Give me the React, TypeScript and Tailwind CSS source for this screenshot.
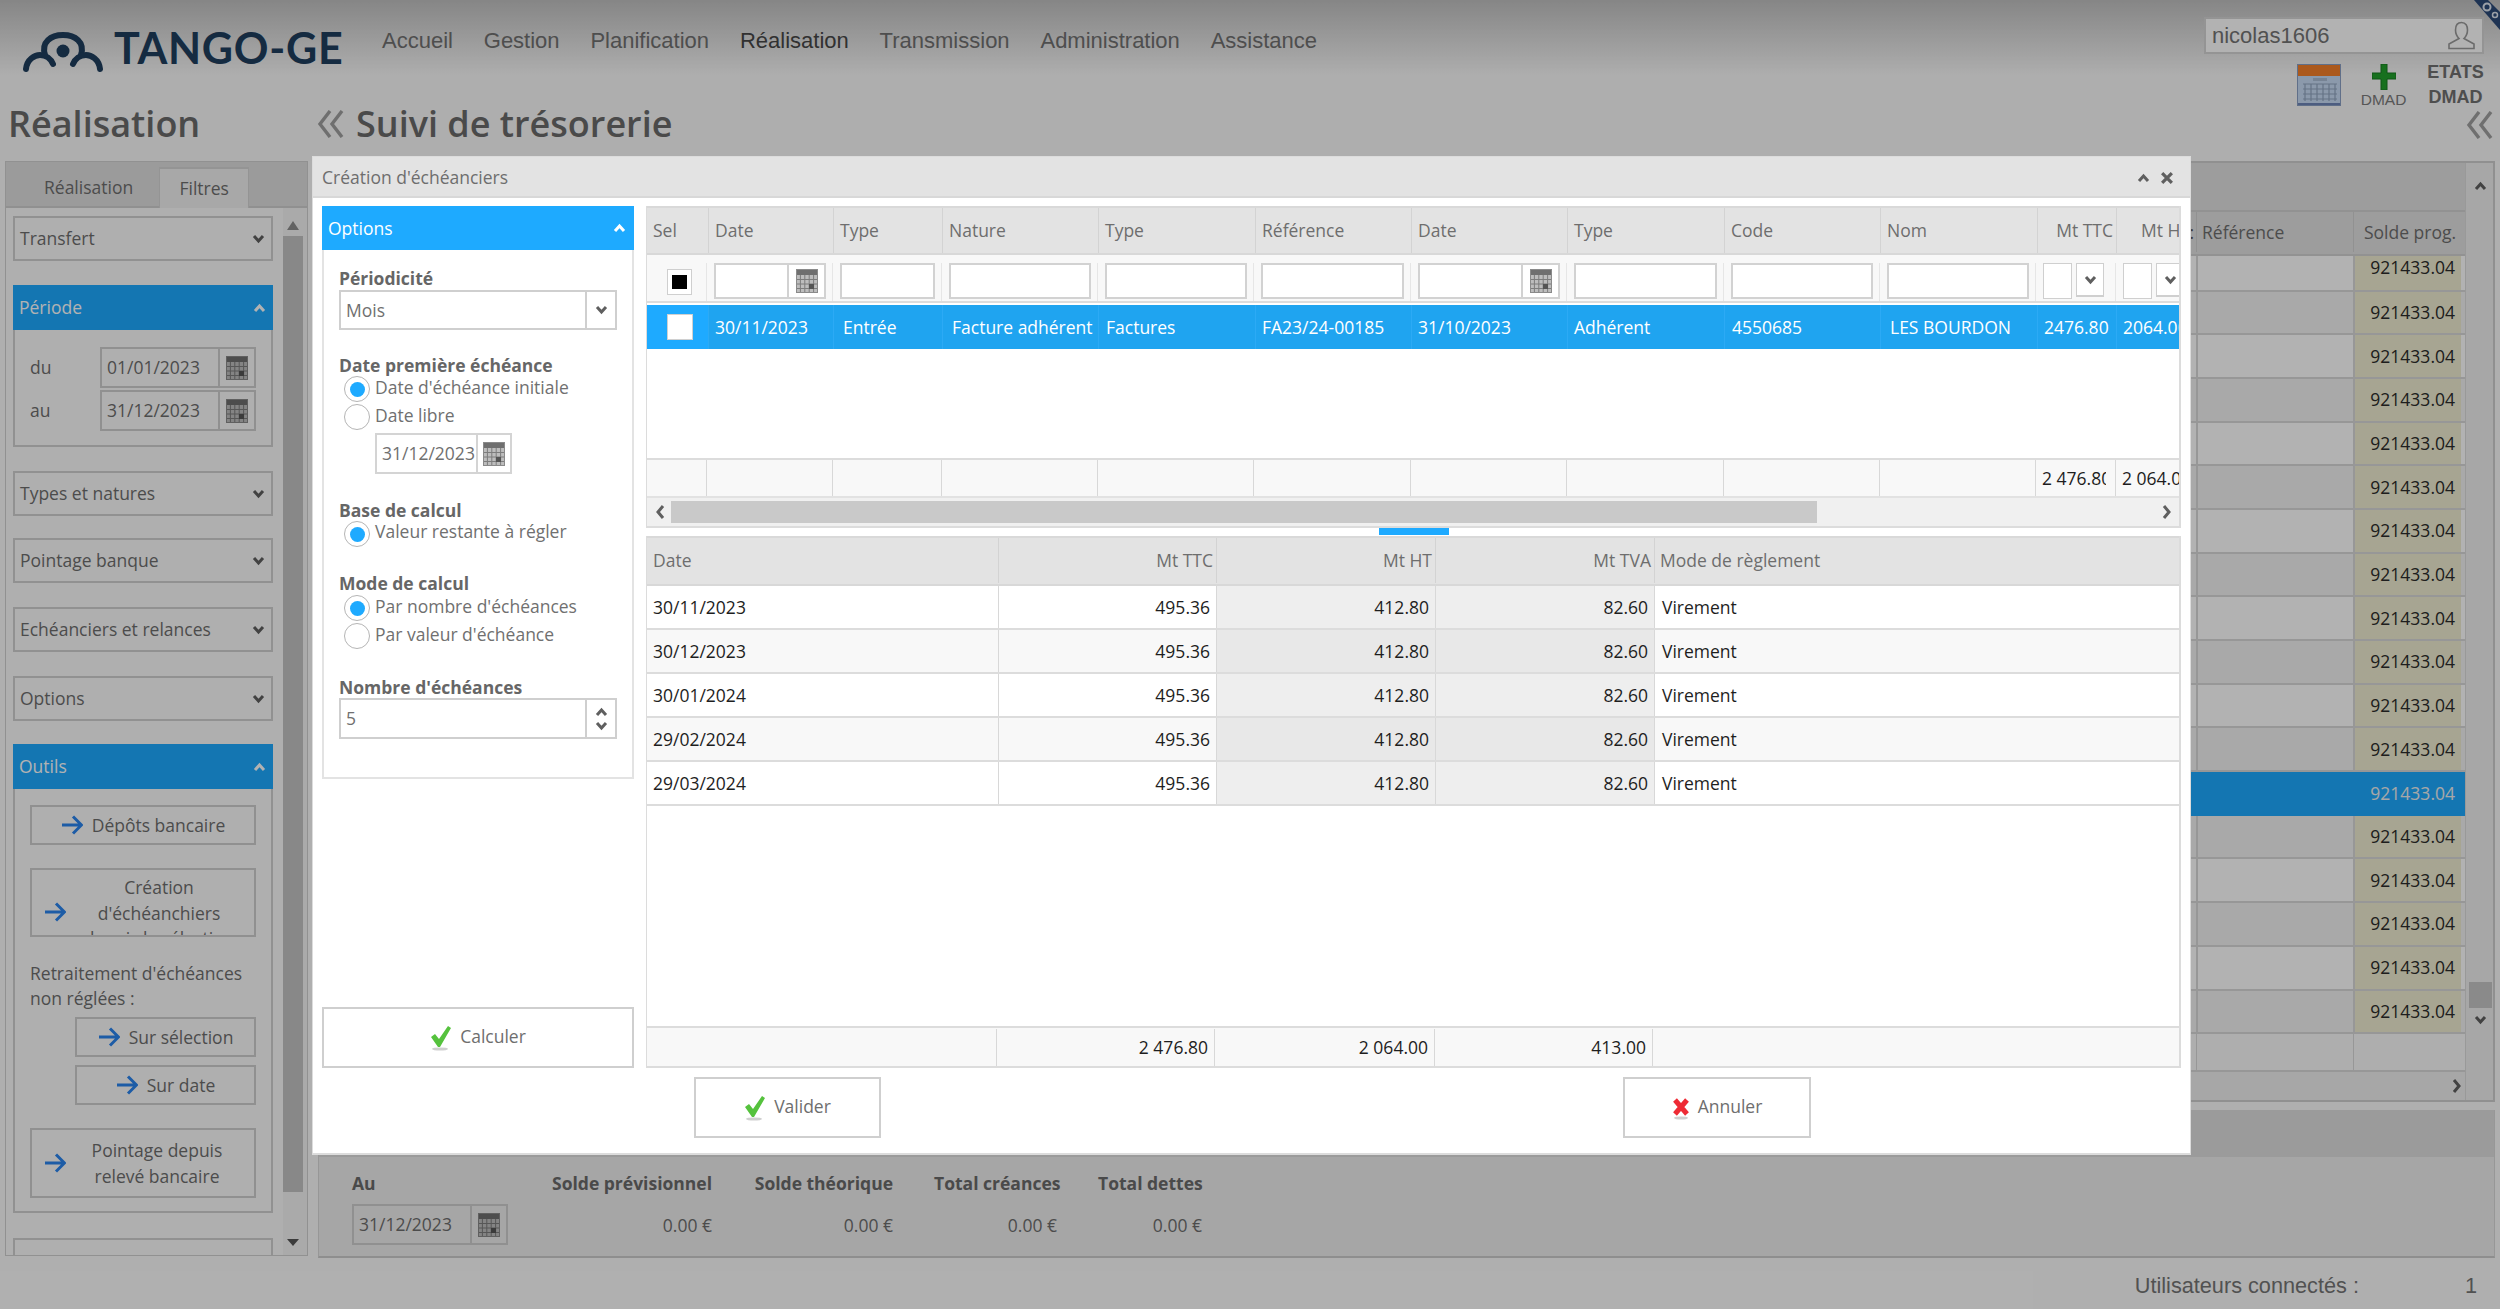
import React from "react";

const Cal = ({ className = "w-[22px] h-[24px]" }: { className?: string }) => (
  <svg viewBox="0 0 22 24" className={className}>
    <rect x="0" y="0" width="22" height="24" fill="#bdbdbd" />
    <rect x="0" y="0" width="22" height="6" fill="#6f6f6f" />
    {[1, 2, 3, 4].map((i) => (
      <line key={i} x1={i * 4.4} x2={i * 4.4} y1="6" y2="24" stroke="#7d7d7d" strokeWidth="1" />
    ))}
    {[1, 2, 3].map((i) => (
      <line key={i} x1="0" x2="22" y1={6 + i * 4.5} y2={6 + i * 4.5} stroke="#7d7d7d" strokeWidth="1" />
    ))}
    <rect x="13" y="15" width="5" height="5" fill="#555" />
    <rect x="0.5" y="0.5" width="21" height="23" fill="none" stroke="#8a8a8a" />
  </svg>
);

const Chev = ({ up = false, className = "w-[13px] h-[10px]", color = "#5f5f5f" }: { up?: boolean; className?: string; color?: string }) => (
  <svg viewBox="0 0 13 10" className={className}>
    <path d={up ? "M2 8 L6.5 3 L11 8" : "M2 2 L6.5 7 L11 2"} fill="none" stroke={color} strokeWidth="3" />
  </svg>
);

const Side = ({ right = false }: { right?: boolean }) => (
  <svg viewBox="0 0 10 14" className="w-[10px] h-[14px]">
    <path d={right ? "M2 1 L7 7 L2 13" : "M8 1 L3 7 L8 13"} fill="none" stroke="#5f5f5f" strokeWidth="3" />
  </svg>
);

const Arrow = () => (
  <svg viewBox="0 0 22 20" className="w-[22px] h-[20px] shrink-0">
    <path d="M1 10 H20 M12 1.5 L20.5 10 L12 18.5" fill="none" stroke="#2a84ee" strokeWidth="3" />
  </svg>
);

const Check = () => (
  <svg viewBox="0 0 22 26" className="w-[22px] h-[26px] shrink-0">
    <ellipse cx="10" cy="24" rx="8" ry="1.6" fill="#cfcfcf" />
    <path d="M1 12 L5 9 L9 14 L18 1 L21 3 L10 22 L8 22 Z" fill="#55c23d" />
  </svg>
);

const Cross = () => (
  <svg viewBox="0 0 18 24" className="w-[18px] h-[24px] shrink-0">
    <ellipse cx="9" cy="22" rx="7" ry="1.6" fill="#cfcfcf" />
    <path d="M3 4 L15 18 M15 4 L3 18" stroke="#ee2b35" strokeWidth="5" />
  </svg>
);

const DoubleLeft = () => (
  <svg viewBox="0 0 28 28" className="w-[28px] h-[28px]">
    <path d="M13 1 L3 14 L13 27 M25 1 L15 14 L25 27" fill="none" stroke="#a0a0a0" strokeWidth="3.4" />
  </svg>
);

const Radio = ({ on = false }: { on?: boolean }) => (
  <span className="w-[26px] h-[26px] rounded-full border border-[#b5b5b5] bg-white flex items-center justify-center shrink-0">
    {on && <span className="w-[15px] h-[15px] rounded-full bg-[#1eaaff]" />}
  </span>
);

const SideHead = ({ label, mt }: { label: string; mt: string }) => (
  <div className={`${mt} h-[45px] shrink-0 border-2 border-[#d0d0d0] flex items-center justify-between pl-[5px] pr-[6px]`}>
    <span>{label}</span>
    <Chev />
  </div>
);

const BlueHead = ({ label, mt, bg = "bg-[#1eaaff]" }: { label: string; mt: string; bg?: string }) => (
  <div className={`${mt} ${bg} h-[45px] shrink-0 flex items-center justify-between pl-[6px] pr-[7px] text-white`}>
    <span>{label}</span>
    <Chev up color="#ffffff" />
  </div>
);

const DateBox = ({ value, cls }: { value: string; cls: string }) => (
  <div className={`${cls} h-[41px] border-2 border-[#cfcfcf] flex items-center shrink-0`}>
    <span className="flex-1 pl-[5px] whitespace-nowrap overflow-hidden">{value}</span>
    <span className="w-[36px] h-full border-l-2 border-[#cfcfcf] flex items-center justify-center shrink-0">
      <Cal />
    </span>
  </div>
);

const top = [
  { w: "w-[62px]", h: "Sel", v: "", p: "pl-[6px]", vp: "pl-[6px]" },
  { w: "w-[125px]", h: "Date", v: "30/11/2023", p: "pl-[6px]", vp: "pl-[6px]" },
  { w: "w-[109px]", h: "Type", v: "Entrée", p: "pl-[6px]", vp: "pl-[9px]" },
  { w: "w-[156px]", h: "Nature", v: "Facture adhérent", p: "pl-[6px]", vp: "pl-[9px]" },
  { w: "w-[157px]", h: "Type", v: "Factures", p: "pl-[6px]", vp: "pl-[7px]" },
  { w: "w-[156px]", h: "Référence", v: "FA23/24-00185", p: "pl-[6px]", vp: "pl-[6px]" },
  { w: "w-[156px]", h: "Date", v: "31/10/2023", p: "pl-[6px]", vp: "pl-[6px]" },
  { w: "w-[157px]", h: "Type", v: "Adhérent", p: "pl-[6px]", vp: "pl-[6px]" },
  { w: "w-[156px]", h: "Code", v: "4550685", p: "pl-[6px]", vp: "pl-[7px]" },
  { w: "w-[157px]", h: "Nom", v: "LES BOURDON", p: "pl-[6px]", vp: "pl-[9px]" },
];

const filterW = ["w-[60px]", "w-[126px]", "w-[109px]", "w-[156px]", "w-[156px]", "w-[157px]", "w-[156px]", "w-[157px]", "w-[156px]", "w-[156px]", "w-[80px]", "w-[78px]"];

const echeances = ["30/11/2023", "30/12/2023", "30/01/2024", "29/02/2024", "29/03/2024"];
const leftRows = Array.from({ length: 18 }, (_, i) => i);

const SideBtn = ({ cls, children }: { cls: string; children: React.ReactNode }) => (
  <div className={`${cls} border-2 border-[#cfcfcf] shrink-0 flex items-center justify-center gap-[9px] overflow-hidden`}>{children}</div>
);

const BigBtn = ({ cls, icon, label }: { cls: string; icon: React.ReactNode; label: string }) => (
  <div className={`${cls} border-2 border-[#cfcfcf] bg-white flex items-center justify-center gap-[8px] text-[#6e6e6e] shrink-0`}>
    {icon}
    <span className="pb-[2px]">{label}</span>
  </div>
);

export default function App() {
  return (
    <div className="relative w-[2500px] h-[1309px] overflow-hidden flex flex-col bg-[#fbfbfb] text-[17.5px] leading-[25px] text-[#6e6e6e] font-['Open_Sans',sans-serif]">
      {/* Header */}
      <header className="h-[161px] shrink-0 flex justify-between bg-[linear-gradient(#c0c0c0,#f9f9f9_75px,#f9f9f9)]">
        <div className="flex flex-col">
          <div className="h-[82px] flex items-start">
            <div className="flex items-center pl-[23px] pt-[32px] gap-[11px] w-[382px]">
              <svg viewBox="0 0 80 40" className="w-[80px] h-[40px] shrink-0">
                <g fill="none" stroke="#1f3e5d" strokeWidth="6" strokeLinecap="round">
                  <path d="M3 37 C4 27 12 23 17 23 C23 23 28 27 30 32" />
                  <path d="M22 23 C18 10 28 3 40 3 C52 3 62 10 58 23" />
                  <path d="M50 32 C52 27 57 23 63 23 C68 23 76 27 77 37" />
                </g>
                <circle cx="40" cy="19" r="6.5" fill="#1f3e5d" />
              </svg>
              <span className="font-['Lato',sans-serif] font-bold text-[43px] leading-[40px] tracking-[0.7px] text-[#1f3e5d] whitespace-nowrap -translate-y-[4px]">TANGO-GE</span>
            </div>
            <nav className="flex gap-[30.85px] pt-[27px] text-[22px] leading-[28px] font-['Liberation_Sans',sans-serif] text-[#707070] whitespace-nowrap">
              <span>Accueil</span>
              <span>Gestion</span>
              <span>Planification</span>
              <span className="text-[#474747]">Réalisation</span>
              <span>Transmission</span>
              <span>Administration</span>
              <span>Assistance</span>
            </nav>
          </div>
          <div className="flex items-center pl-[8px] pt-[19px] text-[36px] leading-[46px] font-semibold text-[#6a6a6a] whitespace-nowrap">
            <span className="w-[309px]">Réalisation</span>
            <DoubleLeft />
            <span className="ml-[11px]">Suivi de trésorerie</span>
          </div>
        </div>
        <div className="flex flex-col items-end pr-[5px]">
          <div className="mt-[17px] mr-[11px] w-[280px] h-[37px] border-2 border-[#d4d4d4] bg-white flex items-center justify-between pl-[6px] pr-[6px] text-[22px] font-['Liberation_Sans',sans-serif] text-[#757575]">
            <span>nicolas1606</span>
            <svg viewBox="0 0 29 29" className="w-[29px] h-[29px]">
              <path d="M14.5 1.5 C10 1.5 8.5 5 8.5 9 C8.5 13 10.5 16 12 17.5 L2 23 V27.5 H27 V23 L17 17.5 C18.5 16 20.5 13 20.5 9 C20.5 5 19 1.5 14.5 1.5 Z" fill="none" stroke="#9a9a9a" strokeWidth="1.6" />
            </svg>
          </div>
          <div className="mt-[10px] mr-[10px] flex items-start font-['Liberation_Sans',sans-serif]">
            <svg viewBox="0 0 44 42" className="w-[44px] h-[42px]">
              <rect x="0" y="0" width="44" height="42" fill="#c8dcf5" />
              <rect x="0" y="0" width="44" height="12" fill="#f5802a" />
              <rect x="0" y="39" width="44" height="3" fill="#6f86b8" />
              <rect x="0.5" y="0.5" width="43" height="41" fill="none" stroke="#8aa0c4" />
              <g stroke="#8fa4bf" strokeWidth="1.2">
                {[8, 14, 20, 26, 32, 38].map((x) => (
                  <line key={x} x1={x} x2={x} y1="20" y2="37" />
                ))}
                {[20, 25, 30, 35].map((y) => (
                  <line key={y} x1="6" x2="40" y1={y} y2={y} />
                ))}
              </g>
              <rect x="16" y="14" width="14" height="3" fill="#a9bcd4" />
            </svg>
            <div className="ml-[20px] w-[45px] flex flex-col items-center">
              <svg viewBox="0 0 24 26" className="w-[24px] h-[26px]">
                <path d="M9 0 H15 V9 H24 V15 H15 V26 H9 V15 H0 V9 H9 Z" fill="#22a12c" stroke="#167a20" strokeWidth="1" />
              </svg>
              <span className="text-[15.5px] leading-[20px] text-[#7c7c7c]">DMAD</span>
            </div>
            <div className="ml-[20px] w-[59px] flex flex-col items-center font-bold text-[18px] leading-[25px] text-[#707070] -mt-[4px]">
              <span>ETATS</span>
              <span>DMAD</span>
            </div>
          </div>
          <div className="mt-[1px] mr-[1px]">
            <DoubleLeft />
          </div>
        </div>
      </header>

      {/* Page body */}
      <div className="h-[1096px] shrink-0 flex pl-[5px] pr-[5px] gap-[10px]">
        {/* Sidebar */}
        <aside className="w-[303px] shrink-0 border border-[#d0d0d0] flex flex-col h-[1095px] overflow-hidden">
          <div className="h-[46px] shrink-0 bg-[#dfdfdf] border-b-2 border-[#cfcfcf] flex items-end pl-[38px] pt-[6px]">
            <span className="pb-[6px] pr-[26px]">Réalisation</span>
            <span className="h-[41px] w-[90px] bg-[#f1f1f1] border-t-2 border-x border-[#d4d4d4] flex items-center justify-center -mb-[2px]">Filtres</span>
          </div>
          <div className="flex-1 flex min-h-0 overflow-hidden">
            <div className="w-[277px] shrink-0 pl-[7px] pr-[10px] flex flex-col overflow-hidden">
              <SideHead label="Transfert" mt="mt-[8px]" />
              <BlueHead label="Période" mt="mt-[24px]" />
              <div className="h-[117px] shrink-0 border-2 border-t-0 border-[#d0d0d0] pt-[17px] pl-[15px]">
                <div className="flex items-center">
                  <span className="w-[70px]">du</span>
                  <DateBox value="01/01/2023" cls="w-[156px]" />
                </div>
                <div className="flex items-center mt-[2px]">
                  <span className="w-[70px]">au</span>
                  <DateBox value="31/12/2023" cls="w-[156px]" />
                </div>
              </div>
              <SideHead label="Types et natures" mt="mt-[24px]" />
              <SideHead label="Pointage banque" mt="mt-[22px]" />
              <SideHead label="Echéanciers et relances" mt="mt-[24px]" />
              <SideHead label="Options" mt="mt-[24px]" />
              <BlueHead label="Outils" mt="mt-[23px]" />
              <div className="h-[424px] shrink-0 border-2 border-t-0 border-[#d0d0d0] pl-[15px] pr-[15px] pt-[16px] flex flex-col">
                <SideBtn cls="h-[40px]">
                  <Arrow />
                  <span>Dépôts bancaire</span>
                </SideBtn>
                <div className="h-[69px] mt-[23px] border-2 border-[#cfcfcf] shrink-0 flex items-start overflow-hidden pl-[12px]">
                  <span className="mt-[32px]"><Arrow /></span>
                  <span className="flex-1 text-center pt-[5px] pr-[6px] pl-[4px] leading-[25.5px]">Création d'échéanchiers depuis la sélection</span>
                </div>
                <p className="mt-[24px]">Retraitement d'échéances<br />non réglées :</p>
                <SideBtn cls="h-[40px] ml-[45px] mt-[6px]">
                  <Arrow />
                  <span>Sur sélection</span>
                </SideBtn>
                <SideBtn cls="h-[40px] ml-[45px] mt-[8px]">
                  <Arrow />
                  <span>Sur date</span>
                </SideBtn>
                <div className="h-[70px] mt-[23px] border-2 border-[#cfcfcf] shrink-0 flex items-center pl-[12px]">
                  <Arrow />
                  <span className="flex-1 text-center leading-[26px] pr-[6px]">Pointage depuis<br />relevé bancaire</span>
                </div>
              </div>
              <div className="mt-[25px] h-[40px] shrink-0 border-2 border-[#d0d0d0]" />
            </div>
            <div className="w-[24px] shrink-0 flex flex-col items-center pr-[4px] bg-[#f4f4f4]">
              <svg viewBox="0 0 12 9" className="w-[12px] h-[9px] mt-[13px] shrink-0"><path d="M6 0 L12 9 H0 Z" fill="#8f8f8f" /></svg>
              <div className="mt-[6px] w-[20px] h-[956px] bg-[#c3c3c3] shrink-0" />
              <svg viewBox="0 0 12 7" className="w-[12px] h-[7px] mt-[47px] shrink-0"><path d="M0 0 H12 L6 7 Z" fill="#555" /></svg>
            </div>
          </div>
        </aside>

        {/* Main */}
        <main className="flex-1 min-w-0 flex flex-col">
          <div className="h-[941px] shrink-0 border-2 border-[#cfcfcf] border-l flex overflow-hidden">
            <div className="flex-1 min-w-0 flex flex-col">
              <div className="h-[47px] shrink-0 bg-[#e1e1e1]" />
              <div className="h-[46px] shrink-0 bg-[#e1e1e1] border-y-2 border-[#d2d2d2] flex items-center pb-[2px]">
                <span className="flex-1 text-right pr-[2px] text-[#555]">:</span>
                <span className="w-[157px] border-l border-[#d0d0d0] h-full flex items-center pl-[5px]">Référence</span>
                <span className="w-[112px] border-l border-[#d0d0d0] h-full flex items-center pl-[10px] whitespace-nowrap overflow-hidden">Solde prog.</span>
              </div>
              <div className="h-[778px] shrink-0 overflow-hidden flex flex-col">
                {leftRows.map((i) =>
                  i === 12 ? (
                    <div key={i} className="h-[43.7px] shrink-0 bg-[#1eaaff] flex items-center justify-end pr-[10px] text-[#f0f0f0]">921433.04</div>
                  ) : (
                    <div key={i} className={`${i === 0 ? "h-[35.5px]" : "h-[43.7px]"} shrink-0 flex border-b-2 border-[#d8d8d8] ${i % 2 === 0 ? "bg-white" : "bg-[#f3f3f3]"}`}>
                      <span className="flex-1" />
                      <span className="w-[157px] border-l-2 border-[#d8d8d8]" />
                      <span className={`w-[108px] border-l-2 border-[#d8d8d8] bg-[#f0edd1] flex items-center justify-end pr-[6px] text-[#2b2b2b] ${i === 0 ? "pb-[10px]" : ""}`}>921433.04</span>
                      <span className="w-[4px]" />
                    </div>
                  )
                )}
              </div>
              <div className="h-[38px] shrink-0 flex justify-end border-b-2 border-[#d8d8d8] bg-[#f9f9f9]">
                <span className="w-[157px] border-l border-[#d8d8d8]" />
                <span className="w-[112px] border-l border-[#d8d8d8]" />
              </div>
              <div className="flex-1 bg-[#f0f0f0] flex items-center justify-end pr-[3px]">
                <Side right />
              </div>
            </div>
            <div className="w-[28px] shrink-0 bg-[#f0f0f0] border-l border-[#dcdcdc] flex flex-col items-center pl-[2px]">
              <div className="mt-[18px] shrink-0"><Chev up /></div>
              <div className="flex-1" />
              <div className="w-[23px] h-[26px] bg-[#c6c6c6] shrink-0" />
              <div className="mt-[7px] mb-[75px] shrink-0"><Chev /></div>
            </div>
          </div>
          <div className="mt-[8px] h-[148px] shrink-0 border-b-2 border-[#cccccc] border-x border-x-[#d8d8d8] bg-[#eeeeee] flex flex-col">
            <div className="h-[47px] shrink-0 bg-[#dfdfdf]" />
            <div className="flex pl-[33px] pt-[14px]">
              <div className="w-[156px]">
                <div className="font-bold text-[#6a6a6a]">Au</div>
                <div className="mt-[8px]"><DateBox value="31/12/2023" cls="w-[156px]" /></div>
              </div>
              {[
                ["Solde prévisionnel", "w-[163px] ml-[41px]"],
                ["Solde théorique", "w-[140px] ml-[41px]"],
                ["Total créances", "w-[123px] ml-[41px]"],
                ["Total dettes", "w-[104px] ml-[41px]"],
              ].map(([l, c]) => (
                <div key={l} className={`${c} text-right whitespace-nowrap`}>
                  <div className="font-bold text-[#6a6a6a]">{l}</div>
                  <div className="mt-[17px]">0.00 €</div>
                </div>
              ))}
            </div>
          </div>
        </main>
      </div>

      {/* Footer */}
      <footer className="flex-1 flex items-center justify-end pt-[4px] pr-[23px] text-[21.7px] font-['Liberation_Sans',sans-serif] text-[#757575]">
        <span>Utilisateurs connectés :</span>
        <span className="ml-[106px]">1</span>
      </footer>

      {/* Corner ribbon */}
      <svg viewBox="0 0 26 30" className="absolute top-0 right-0 w-[26px] h-[30px]">
        <polygon points="0,0 14,0 26,12 26,30" fill="#2c4a78" />
        <circle cx="13" cy="7" r="3.5" fill="none" stroke="#dfe6f0" strokeWidth="2" />
        <circle cx="21" cy="15" r="2.5" fill="none" stroke="#dfe6f0" strokeWidth="1.5" />
      </svg>

      {/* Dim layer */}
      <div className="absolute inset-0 bg-black/30" />

      {/* Modal */}
      <section className="absolute left-[312px] top-[156px] w-[1879px] h-[999px] bg-white flex flex-col border border-[#dcdcdc] border-b-2">
        <div className="h-[41px] shrink-0 bg-[#e3e3e3] border-b-2 border-[#d8d8d8] flex items-center justify-between pl-[9px] pr-[16px] pt-[2px]">
          <span>Création d'échéanciers</span>
          <div className="flex items-center gap-[10px]">
            <Chev up />
            <svg viewBox="0 0 13 13" className="w-[14px] h-[14px]"><path d="M2 2 L11 11 M11 2 L2 11" stroke="#5f5f5f" strokeWidth="3" /></svg>
          </div>
        </div>
        <div className="flex pl-[9px] pt-[8px] gap-[12px] shrink-0">
          {/* Options */}
          <div className="w-[312px] h-[862px] shrink-0 flex flex-col justify-between">
            <div className="h-[573px] border-2 border-t-0 border-[#e3e3e3] flex flex-col">
              <div className="-mx-[2px] h-[44px] shrink-0 bg-[#1eaaff] flex items-center justify-between pl-[6px] pr-[8px] text-white">
                <span>Options</span>
                <Chev up color="#ffffff" />
              </div>
              <div className="pl-[15px] pr-[15px] pt-[16px] flex flex-col text-[#707070]">
                <label className="font-bold leading-[24px] text-[#666]">Périodicité</label>
                <div className="mt-0 h-[40px] border-2 border-[#cfcfcf] flex items-center">
                  <span className="flex-1 pl-[5px]">Mois</span>
                  <span className="w-[30px] h-full border-l-2 border-[#cfcfcf] flex items-center justify-center"><Chev /></span>
                </div>
                <label className="font-bold leading-[24px] text-[#666] mt-[23px]">Date première échéance</label>
                <div className="flex items-center gap-[5px] pl-[5px] h-[26px] -mt-[1px]"><Radio on /><span className="-mt-[3px]">Date d'échéance initiale</span></div>
                <div className="flex items-center gap-[5px] pl-[5px] h-[26px] mt-[2px]"><Radio /><span className="-mt-[3px]">Date libre</span></div>
                <div className="ml-[36px] mt-[3px] w-[137px] h-[41px] border-2 border-[#d4d4d4] flex items-center">
                  <span className="w-[99px] pl-[5px] whitespace-nowrap overflow-hidden shrink-0">31/12/2023</span>
                  <span className="flex-1 h-full border-l-2 border-[#d4d4d4] flex items-center justify-center"><Cal /></span>
                </div>
                <label className="font-bold leading-[24px] text-[#666] mt-[24px]">Base de calcul</label>
                <div className="flex items-center gap-[5px] pl-[5px] h-[26px] -mt-[1px]"><Radio on /><span className="-mt-[5px]">Valeur restante à régler</span></div>
                <label className="font-bold leading-[24px] text-[#666] mt-[24px]">Mode de calcul</label>
                <div className="flex items-center gap-[5px] pl-[5px] h-[26px]"><Radio on /><span className="-mt-[3px]">Par nombre d'échéances</span></div>
                <div className="flex items-center gap-[5px] pl-[5px] h-[26px] mt-[2px]"><Radio /><span className="-mt-[3px]">Par valeur d'échéance</span></div>
                <label className="font-bold leading-[24px] text-[#666] mt-[26px]">Nombre d'échéances</label>
                <div className="h-[41px] -mt-[1px] border-2 border-[#cfcfcf] flex items-center">
                  <span className="flex-1 pl-[5px]">5</span>
                  <span className="w-[30px] h-full border-l-2 border-[#cfcfcf] flex flex-col items-center justify-center gap-[4px]"><Chev up /><Chev /></span>
                </div>
              </div>
            </div>
            <BigBtn cls="h-[61px]" icon={<Check />} label="Calculer" />
          </div>

          {/* Grids */}
          <div className="w-[1535px] shrink-0 flex flex-col">
            <div className="h-[322px] border-2 border-t-0 border-l border-[#dcdcdc] flex flex-col overflow-hidden">
              <div className="h-[49px] shrink-0 flex border-t-2 border-[#d9d9d9] bg-[#e3e3e3] border-b-2 border-b-[#d8d8d8]">
                {top.map((c, i) => (
                  <span key={i} className={`${c.w} ${c.p} shrink-0 flex items-center border-r border-[#d3d3d3]`}>{c.h}</span>
                ))}
                <span className="w-[79px] shrink-0 flex items-center justify-end pr-[3px] border-r border-[#d3d3d3]">Mt TTC</span>
                <span className="w-[78px] shrink-0 flex items-center justify-end pr-[5px]">Mt HT</span>
              </div>
              <div className="h-[48px] shrink-0 flex bg-[#f8f8f8] border-b-2 border-[#dcdcdc] pt-[8px]">
                {filterW.map((w, i) => (
                  <div key={i} className={`${w} shrink-0 h-[38px] border-r border-[#e6e6e6] flex items-start pl-[7px] pr-[6px]`}>
                    {i === 0 ? (
                      <span className="ml-[13px] mt-[6px] w-[25px] h-[26px] border border-[#cfcfcf] bg-white flex items-center justify-center">
                        <span className="w-[15px] h-[14px] bg-black" />
                      </span>
                    ) : i === 1 || i === 6 ? (
                      <span className="flex-1 h-[36px] border-2 border-[#d2d2d2] bg-white flex justify-end">
                        <span className="w-[37px] h-full border-l-2 border-[#d2d2d2] flex items-center justify-center"><Cal /></span>
                      </span>
                    ) : i >= 10 ? (
                      <span className="flex-1 flex gap-[4px]">
                        <span className="w-[29px] h-[36px] border border-[#cfcfcf] bg-white shrink-0" />
                        <span className="w-[28px] h-[34px] border border-[#cfcfcf] border-b-2 bg-white flex items-center justify-center shrink-0"><Chev /></span>
                      </span>
                    ) : (
                      <span className="flex-1 h-[36px] border-2 border-[#d2d2d2] bg-white" />
                    )}
                  </div>
                ))}
              </div>
              <div className="h-[44px] mt-[2px] shrink-0 flex bg-[#1fa4f0] text-white">
                {top.map((c, i) => (
                  <span key={i} className={`${c.w} ${c.vp} ${i === 0 ? "bg-[#1eaaff]" : ""} shrink-0 flex items-center border-r border-[#2caaf5] whitespace-nowrap overflow-hidden`}>
                    {i === 0 && <span className="ml-[14px] w-[26px] h-[26px] bg-white border border-[#d0d0d0]" />}
                    {c.v}
                  </span>
                ))}
                <span className="w-[79px] pl-[6px] shrink-0 flex items-center border-r border-[#2caaf5] overflow-hidden">2476.80</span>
                <span className="w-[78px] pl-[6px] shrink-0 flex items-center overflow-hidden">2064.00</span>
              </div>
              <div className="h-[111px] shrink-0 bg-white border-b-2 border-[#dcdcdc]" />
              <div className="h-[38px] shrink-0 flex bg-[#f8f8f8] border-b-2 border-[#e2e2e2]">
                {filterW.map((w, i) => (
                  <span key={i} className={`${w} shrink-0 border-r border-[#d8d8d8] flex items-center pl-[6px] ${i === 10 ? "pr-[9px]" : "pr-[4px]"} text-[#1e1e1e] overflow-hidden`}>
                    {i >= 10 && <span className="block w-full overflow-hidden whitespace-nowrap">{i === 10 ? "2 476.80" : "2 064.00"}</span>}
                  </span>
                ))}
              </div>
              <div className="flex-1 bg-[#f0f0f0] flex items-center pl-[8px] pr-[7px] justify-between">
                <Side />
                <div className="flex-1 h-[22px] ml-[6px] mr-[345px] bg-[#c9c9c9]" />
                <Side right />
              </div>
            </div>
            <div className="h-[8px] shrink-0 flex justify-center">
              <div className="w-[70px] h-[7px] bg-[#1eaaff]" />
            </div>
            <div className="h-[532px] border-2 border-t-0 border-l border-[#dcdcdc] flex flex-col text-[#1e1e1e]">
              <div className="h-[50px] shrink-0 flex border-t-2 border-[#d9d9d9] bg-[#e3e3e3] border-b-2 border-b-[#d8d8d8] text-[#6e6e6e] pb-[1px]">
                <span className="w-[352px] shrink-0 pl-[6px] flex items-center border-r border-[#d3d3d3]">Date</span>
                <span className="w-[218px] shrink-0 pr-[3px] flex items-center justify-end border-r border-[#d3d3d3]">Mt TTC</span>
                <span className="w-[219px] shrink-0 pr-[3px] flex items-center justify-end border-r border-[#d3d3d3]">Mt HT</span>
                <span className="w-[219px] shrink-0 pr-[3px] flex items-center justify-end border-r border-[#d3d3d3]">Mt TVA</span>
                <span className="flex-1 pl-[5px] flex items-center">Mode de règlement</span>
              </div>
              {echeances.map((d, i) => {
                const base = i % 2 ? "bg-[#f8f8f8]" : "bg-white";
                const dark = i % 2 ? "bg-[#e8e8e8]" : "bg-[#eeeeee]";
                return (
                  <div key={d} className="h-[44px] shrink-0 flex border-b-2 border-[#dcdcdc]">
                    <span className={`${base} w-[352px] shrink-0 pl-[6px] flex items-center border-r border-[#d8d8d8]`}>{d}</span>
                    <span className={`${base} w-[218px] shrink-0 pr-[6px] flex items-center justify-end border-r border-[#d8d8d8]`}>495.36</span>
                    <span className={`${dark} w-[219px] shrink-0 pr-[6px] flex items-center justify-end border-r border-[#d8d8d8]`}>412.80</span>
                    <span className={`${dark} w-[219px] shrink-0 pr-[6px] flex items-center justify-end border-r border-[#d8d8d8]`}>82.60</span>
                    <span className={`${base} flex-1 pl-[7px] flex items-center`}>Virement</span>
                  </div>
                );
              })}
              <div className="flex-1 bg-white border-b-2 border-[#dcdcdc]" />
              <div className="h-[38px] shrink-0 flex bg-[#f8f8f8] pt-[1px]">
                <span className="w-[350px] shrink-0 border-r border-[#d8d8d8]" />
                <span className="w-[218px] shrink-0 pr-[6px] flex items-center justify-end border-r border-[#d8d8d8]">2 476.80</span>
                <span className="w-[220px] shrink-0 pr-[6px] flex items-center justify-end border-r border-[#d8d8d8]">2 064.00</span>
                <span className="w-[218px] shrink-0 pr-[6px] flex items-center justify-end border-r border-[#d8d8d8]">413.00</span>
                <span className="flex-1" />
              </div>
            </div>
          </div>
        </div>
        <div className="flex mt-[9px] pl-[381px] gap-[742px]">
          <BigBtn cls="w-[187px] h-[61px]" icon={<Check />} label="Valider" />
          <BigBtn cls="w-[188px] h-[61px]" icon={<Cross />} label="Annuler" />
        </div>
      </section>
    </div>
  );
}
